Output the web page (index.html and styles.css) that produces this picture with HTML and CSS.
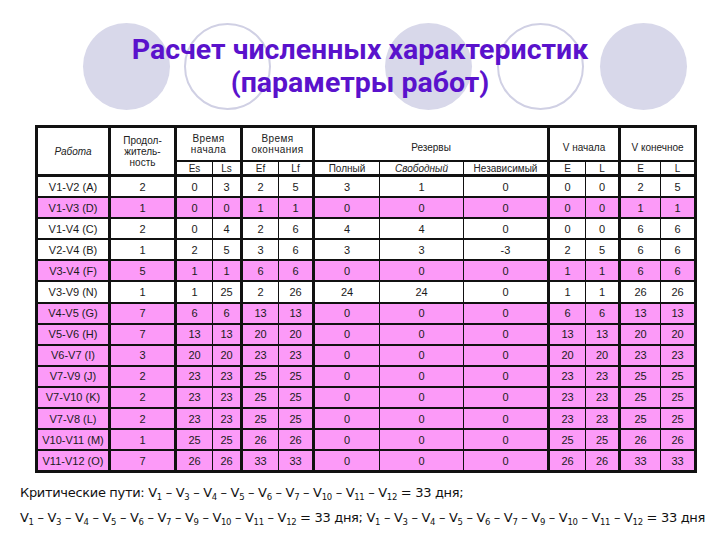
FILE: index.html
```html
<!DOCTYPE html>
<html lang="ru">
<head>
<meta charset="utf-8">
<title>Расчет численных характеристик</title>
<link rel="stylesheet" href="styles.css">
</head>
<body>
<header class="head">
  <span class="circ fill c1"></span>
  <span class="circ ring c2"></span>
  <span class="circ fill c3"></span>
  <span class="circ ring c4"></span>
  <span class="circ fill c5"></span>
  <h1 class="title">Расчет численных характеристик<br>(параметры работ)</h1>
</header>

<table class="grid">
  <colgroup>
    <col class="w73"><col class="w66"><col class="w37"><col class="w29"><col class="w37"><col class="w35">
    <col class="w66"><col class="w84"><col class="w85"><col class="w37"><col class="w34"><col class="w41"><col class="w35">
  </colgroup>
  <thead>
    <tr class="h1">
      <th rowspan="2" class="it">Работа</th>
      <th rowspan="2">Продол-<br>житель-<br>ность</th>
      <th colspan="2" class="sp">Время<br>начала</th>
      <th colspan="2" class="sp">Время<br>окончания</th>
      <th colspan="3" class="low">Резервы</th>
      <th colspan="2" class="low">V начала</th>
      <th colspan="2" class="low">V конечное</th>
    </tr>
    <tr class="h2">
      <th class="k">Es</th><th>Ls</th><th class="k">Ef</th><th>Lf</th>
      <th class="k">Полный</th><th class="it">Свободный</th><th>Независимый</th>
      <th class="k">E</th><th>L</th><th class="k">E</th><th>L</th>
    </tr>
  </thead>
  <tbody>
    <tr><td>V1-V2 (A)</td><td>2</td><td>0</td><td>3</td><td>2</td><td>5</td><td>3</td><td>1</td><td>0</td><td>0</td><td>0</td><td>2</td><td>5</td></tr>
    <tr class="pk"><td>V1-V3 (D)</td><td>1</td><td>0</td><td>0</td><td>1</td><td>1</td><td>0</td><td>0</td><td>0</td><td>0</td><td>0</td><td>1</td><td>1</td></tr>
    <tr><td>V1-V4 (C)</td><td>2</td><td>0</td><td>4</td><td>2</td><td>6</td><td>4</td><td>4</td><td>0</td><td>0</td><td>0</td><td>6</td><td>6</td></tr>
    <tr><td>V2-V4 (B)</td><td>1</td><td>2</td><td>5</td><td>3</td><td>6</td><td>3</td><td>3</td><td>-3</td><td>2</td><td>5</td><td>6</td><td>6</td></tr>
    <tr class="pk"><td>V3-V4 (F)</td><td>5</td><td>1</td><td>1</td><td>6</td><td>6</td><td>0</td><td>0</td><td>0</td><td>1</td><td>1</td><td>6</td><td>6</td></tr>
    <tr><td>V3-V9 (N)</td><td>1</td><td>1</td><td>25</td><td>2</td><td>26</td><td>24</td><td>24</td><td>0</td><td>1</td><td>1</td><td>26</td><td>26</td></tr>
    <tr class="pk"><td>V4-V5 (G)</td><td>7</td><td>6</td><td>6</td><td>13</td><td>13</td><td>0</td><td>0</td><td>0</td><td>6</td><td>6</td><td>13</td><td>13</td></tr>
    <tr class="pk"><td>V5-V6 (H)</td><td>7</td><td>13</td><td>13</td><td>20</td><td>20</td><td>0</td><td>0</td><td>0</td><td>13</td><td>13</td><td>20</td><td>20</td></tr>
    <tr class="pk"><td>V6-V7 (I)</td><td>3</td><td>20</td><td>20</td><td>23</td><td>23</td><td>0</td><td>0</td><td>0</td><td>20</td><td>20</td><td>23</td><td>23</td></tr>
    <tr class="pk"><td>V7-V9 (J)</td><td>2</td><td>23</td><td>23</td><td>25</td><td>25</td><td>0</td><td>0</td><td>0</td><td>23</td><td>23</td><td>25</td><td>25</td></tr>
    <tr class="pk"><td>V7-V10 (K)</td><td>2</td><td>23</td><td>23</td><td>25</td><td>25</td><td>0</td><td>0</td><td>0</td><td>23</td><td>23</td><td>25</td><td>25</td></tr>
    <tr class="pk"><td>V7-V8 (L)</td><td>2</td><td>23</td><td>23</td><td>25</td><td>25</td><td>0</td><td>0</td><td>0</td><td>23</td><td>23</td><td>25</td><td>25</td></tr>
    <tr class="pk"><td>V10-V11 (M)</td><td>1</td><td>25</td><td>25</td><td>26</td><td>26</td><td>0</td><td>0</td><td>0</td><td>25</td><td>25</td><td>26</td><td>26</td></tr>
    <tr class="pk"><td>V11-V12 (O)</td><td>7</td><td>26</td><td>26</td><td>33</td><td>33</td><td>0</td><td>0</td><td>0</td><td>26</td><td>26</td><td>33</td><td>33</td></tr>
  </tbody>
</table>

<div class="paths">
  <p>Критические пути: V<sub>1</sub> – V<sub>3</sub> – V<sub>4</sub> – V<sub>5</sub> – V<sub>6</sub> – V<sub>7</sub> – V<sub>10</sub> – V<sub>11</sub> – V<sub>12</sub> = 33 дня;</p>
  <p>V<sub>1</sub> – V<sub>3</sub> – V<sub>4</sub> – V<sub>5</sub> – V<sub>6</sub> – V<sub>7</sub> – V<sub>9</sub> – V<sub>10</sub> – V<sub>11</sub> – V<sub>12</sub> = 33 дня; V<sub>1</sub> – V<sub>3</sub> – V<sub>4</sub> – V<sub>5</sub> – V<sub>6</sub> – V<sub>7</sub> – V<sub>9</sub> – V<sub>10</sub> – V<sub>11</sub> – V<sub>12</sub> = 33 дня</p>
</div>
</body>
</html>
```

FILE: styles.css
```css
html, body {
  margin: 0;
  padding: 0;
  background: #ffffff;
}

body {
  width: 720px;
  height: 540px;
  overflow: hidden;
  font-family: "Liberation Sans", Arial, sans-serif;
  color: #1a1a1a;
}

.head {
  position: relative;
  height: 125px;
}

.circ {
  position: absolute;
  top: 23px;
  width: 87px;
  height: 87px;
  border-radius: 50%;
  box-sizing: border-box;
}

.fill { background: #d8d8ea; }
.ring { border: 2px solid #d0d0e4; background: #ffffff; }

.c1 { left: 83px; }
.c2 { left: 184px; }
.c3 { left: 385px; }
.c4 { left: 497px; }
.c5 { left: 600px; }

.title {
  position: relative;
  margin: 0;
  padding-top: 33px;
  text-align: center;
  font-family: Roboto, "Noto Sans", sans-serif;
  font-weight: 700;
  font-size: 28.5px;
  line-height: 33px;
  color: #5a12cc;
}

.grid {
  margin-left: 35px;
  width: 660px;
  table-layout: fixed;
  border-collapse: collapse;
  border: 3px solid #111;
  font-size: 11px;
}

.w73 { width: 73px; }
.w66 { width: 66px; }
.w37 { width: 37px; }
.w29 { width: 29px; }
.w35 { width: 35px; }
.w84 { width: 84px; }
.w85 { width: 85px; }
.w34 { width: 34px; }
.w41 { width: 41px; }

.grid th, .grid td {
  padding: 0;
  text-align: center;
  vertical-align: middle;
  border: 1px solid #111;
  border-top-width: 2px;
  border-bottom-width: 2px;
  overflow: hidden;
  white-space: nowrap;
}

.grid th {
  font-weight: 400;
  font-size: 10px;
  line-height: 11px;
  color: #222;
}

.h1 th { height: 26px; border-left-width: 3px; }
.h1 th.low { padding-top: 6px; }
.h2 th { height: 12px; }
.h2 th.k { border-left-width: 3px; }
.it { font-style: italic; }
.sp { letter-spacing: 0.4px; }

.grid thead tr.h2 th,
.grid thead th[rowspan] { border-bottom-width: 3px; }

.grid td { height: 19.1px; }

.grid td:nth-child(1),
.grid td:nth-child(2),
.grid td:nth-child(3),
.grid td:nth-child(5),
.grid td:nth-child(7),
.grid td:nth-child(10),
.grid td:nth-child(12) { border-left-width: 3px; }

.pk td { background: #fc9af8; }

.paths {
  margin-top: 7px;
  padding-left: 20px;
  font-family: "DejaVu Sans", sans-serif;
  font-size: 13px;
  color: #111;
}

.paths p {
  margin: 0;
  line-height: 25px;
  white-space: nowrap;
  letter-spacing: -0.32px;
}

.paths sub {
  font-size: 8.5px;
  vertical-align: -3px;
  line-height: 0;
}
```
